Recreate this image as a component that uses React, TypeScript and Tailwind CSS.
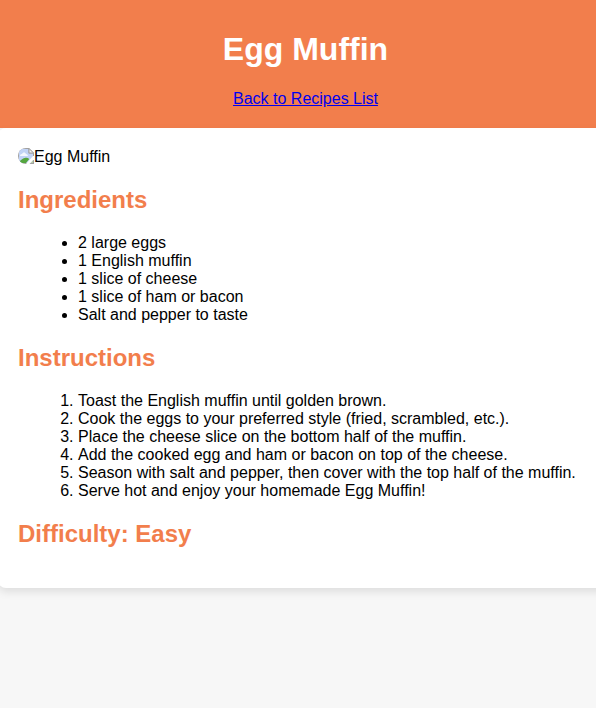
const ingredients = [
  "2 large eggs",
  "1 English muffin",
  "1 slice of cheese",
  "1 slice of ham or bacon",
  "Salt and pepper to taste",
];

const steps = [
  "Toast the English muffin until golden brown.",
  "Cook the eggs to your preferred style (fried, scrambled, etc.).",
  "Place the cheese slice on the bottom half of the muffin.",
  "Add the cooked egg and ham or bacon on top of the cheese.",
  "Season with salt and pepper, then cover with the top half of the muffin.",
  "Serve hot and enjoy your homemade Egg Muffin!",
];

function MissingImage() {
  return (
    <svg width="16" height="16" viewBox="0 0 16 16" className="shrink-0 rounded-tl-lg rounded-bl-lg" aria-hidden="true">
      <path d="M0 0H11L16 5V16H0Z" fill="#a0a0a0" />
      <path d="M1 1H10.5V5.5H15V15H1Z" fill="#c1d3f6" />
      <path d="M2 8C2 6.5 3 5.8 4 6C4.5 4 7.5 3.8 8 6C9.2 6 10 7 9.8 8Z" fill="#f4f8ff" />
      <path d="M1 15V14C3 12 5 9.7 7.5 9.7C9 9.7 10.5 10.2 11.3 11L8 15Z" fill="#55a63f" />
      <path d="M11 0.5V5H15.5Z" fill="#f1f1f1" stroke="#a0a0a0" strokeWidth="1" />
      <path d="M8 16L15 8H16V11.5L11.5 16Z" fill="#fff" />
      <path d="M12.5 15L15 12.3V15Z" fill="#b5cda8" />
    </svg>
  );
}

function Heading({ children }: { children: string }) {
  return <h2 className="my-5 text-2xl leading-7 font-bold text-[#f27e4c]">{children}</h2>;
}

export default function App() {
  return (
    <div className="h-[708px] w-full overflow-hidden bg-[#f7f7f7] font-['Liberation_Sans',Arial,sans-serif] text-base leading-[18px] text-black">
      <header className="h-32 w-[611px] bg-[#f27e4c] pt-[31px] text-center">
        <h1 className="text-[32px] leading-9 font-bold text-white">Egg Muffin</h1>
        <a href="#" className="mt-[23px] block text-[#0000ee] underline">Back to Recipes List</a>
      </header>
      <main className="-ml-0.5 flow-root w-[615px] rounded-lg bg-white px-5 pt-5 pb-5 shadow-[0_4px_8px_rgba(0,0,0,0.1)]">
        <div className="flex h-[18px] items-start">
          <MissingImage />
          <span>Egg Muffin</span>
        </div>
        <Heading>Ingredients</Heading>
        <ul className="list-disc pl-[60px]">
          {ingredients.map((item) => <li key={item}>{item}</li>)}
        </ul>
        <Heading>Instructions</Heading>
        <ol className="list-decimal pl-[60px]">
          {steps.map((step) => <li key={step}>{step}</li>)}
        </ol>
        <div className="flow-root">
          <Heading>Difficulty: Easy</Heading>
        </div>
      </main>
    </div>
  );
}
